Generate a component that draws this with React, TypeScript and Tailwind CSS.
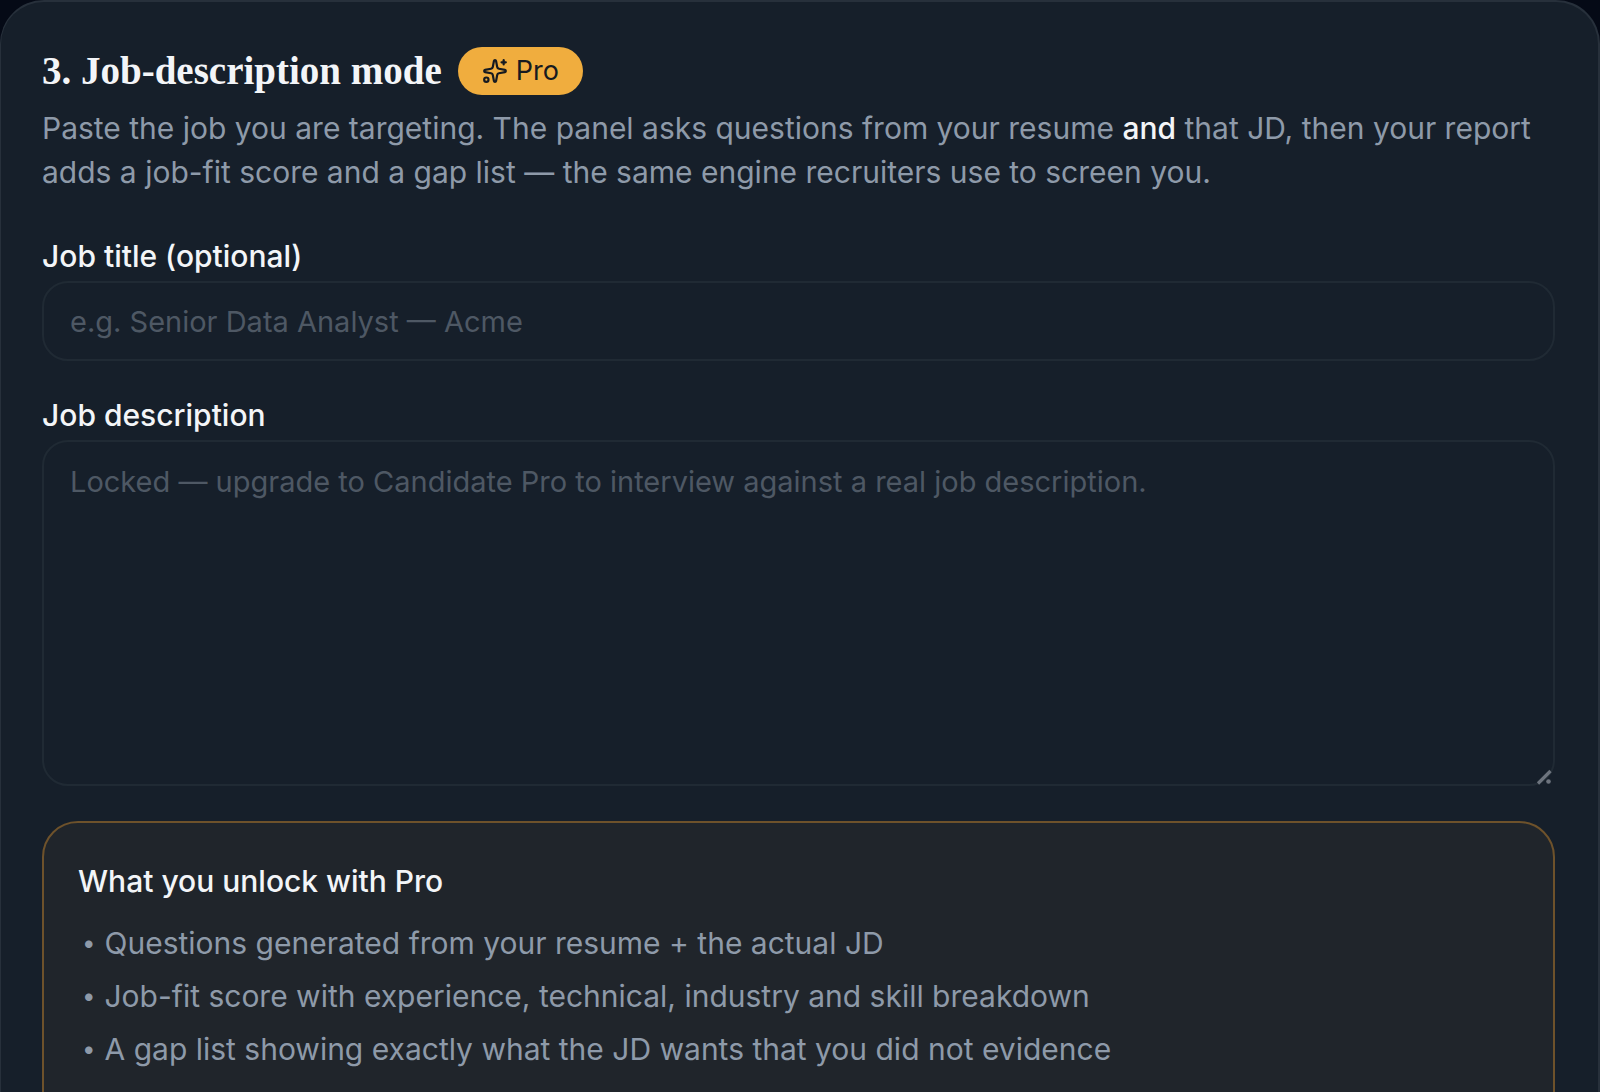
import React from "react";

const perks = [
  "Questions generated from your resume + the actual JD",
  "Job-fit score with experience, technical, industry and skill breakdown",
  "A gap list showing exactly what the JD wants that you did not evidence",
];

function SparkleIcon() {
  return (
    <svg
      viewBox="0 0 24 24"
      fill="none"
      stroke="currentColor"
      strokeWidth="2"
      strokeLinecap="round"
      strokeLinejoin="round"
      className="size-[26px] shrink-0"
      aria-hidden="true"
    >
      <path d="M11.017 2.814a1 1 0 0 1 1.966 0l1.051 5.558a2 2 0 0 0 1.594 1.594l5.558 1.051a1 1 0 0 1 0 1.966l-5.558 1.051a2 2 0 0 0-1.594 1.594l-1.051 5.558a1 1 0 0 1-1.966 0l-1.051-5.558a2 2 0 0 0-1.594-1.594l-5.558-1.051a1 1 0 0 1 0-1.966l5.558-1.051a2 2 0 0 0 1.594-1.594z" />
      <path d="M20 2v4" />
      <path d="M22 4h-4" />
      <circle cx="4" cy="20" r="2" />
    </svg>
  );
}

function ResizeGrip() {
  return (
    <svg
      viewBox="0 0 16 16"
      className="pointer-events-none absolute right-[3px] bottom-px size-4"
      aria-hidden="true"
    >
      <path d="M2 14.500L14.500 2" stroke="#6d747e" strokeWidth="3.2" />
      <circle cx="12.500" cy="12.500" r="2.300" fill="#6d747e" />
    </svg>
  );
}

export default function App() {
  return (
    <main className="h-screen overflow-hidden bg-[#050a16] font-['Inter',sans-serif] text-[30px] leading-[44px] text-[#8e9aa9]">
      <section className="rounded-t-[44px] border-t-2 border-r-2 border-l border-[#27303b] bg-[#161f2a] pt-[45px] pr-[43px] pb-10 pl-[41px]">
        <header>
          <div className="flex items-center gap-4">
            <h2 className="font-['Liberation_Serif',serif] text-[39px] leading-[48px] font-bold text-[#f3f5f8]">
              3. Job-description mode
            </h2>
            <span className="flex h-12 items-center gap-2 rounded-full bg-[#f0ad3e] px-6 text-[27px] text-[#161a20]">
              <SparkleIcon />
              Pro
            </span>
          </div>
          <p className="mt-[11px]">
            Paste the job you are targeting. The panel asks questions from your resume{" "}
            <strong className="font-medium text-[#f3f5f8]">and</strong> that JD, then your report
            adds a job-fit score and a gap list — the same engine recruiters use to screen you.
          </p>
        </header>

        <form className="mt-10 flex flex-col gap-8">
          <div className="flex flex-col">
            <label htmlFor="job-title" className="pb-[3px] font-medium text-[#f3f5f8]">
              Job title (optional)
            </label>
            <input
              id="job-title"
              type="text"
              placeholder="e.g. Senior Data Analyst — Acme"
              className="h-20 w-full rounded-[26px] border-2 border-[#202a34] bg-transparent px-[26px] text-[29px] placeholder:text-[#4e5864]"
            />
          </div>
          <div className="flex flex-col">
            <label htmlFor="job-description" className="pb-[3px] font-medium text-[#f3f5f8]">
              Job description
            </label>
            <div className="relative flex">
              <textarea
                id="job-description"
                placeholder="Locked — upgrade to Candidate Pro to interview against a real job description."
                className="h-[346px] w-full resize-none rounded-[26px] border-2 border-[#202a34] bg-transparent px-[26px] py-[18px] text-[29px] placeholder:text-[#4e5864]"
              />
              <ResizeGrip />
            </div>
          </div>
        </form>

        <aside className="mt-[35px] rounded-[36px] border-2 border-[#6e522b] bg-[#20252b] px-[34px] pt-9 pb-20">
          <h3 className="font-medium text-[#f3f5f8]">What you unlock with Pro</h3>
          <ul className="mt-[18px] flex flex-col gap-[9px] pl-1">
            {perks.map((perk) => (
              <li key={perk} className="flex gap-[9px]">
                <span className="text-[24px]">•</span>
                {perk}
              </li>
            ))}
          </ul>
        </aside>
      </section>
    </main>
  );
}
